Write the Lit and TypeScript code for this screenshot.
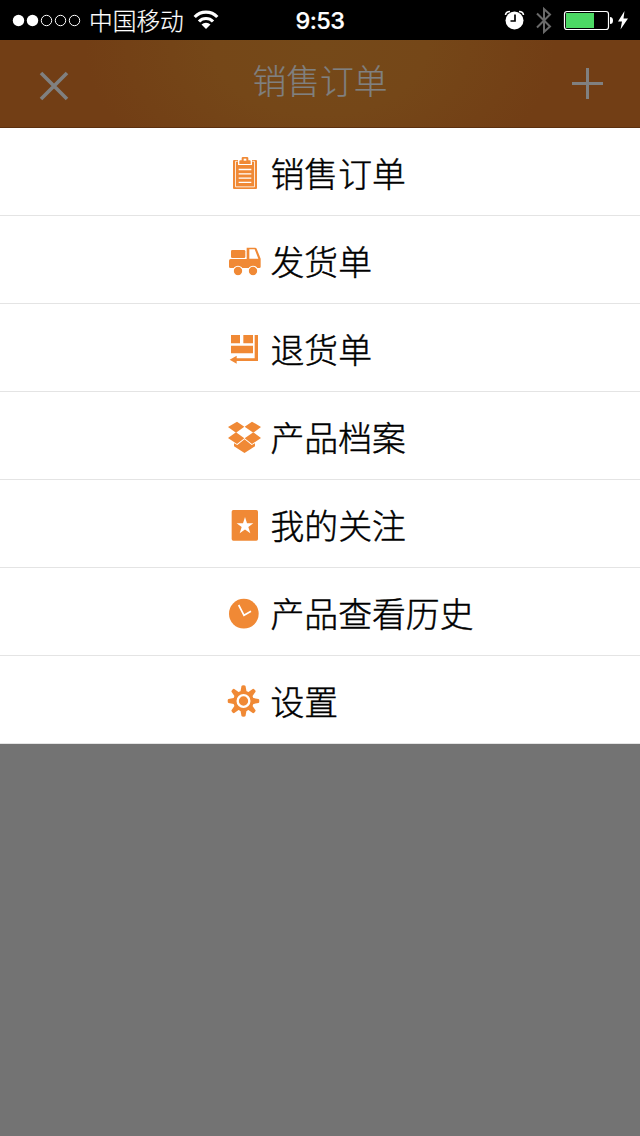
import { LitElement, html, css, svg } from "lit";
import { customElement } from "lit/decorators.js";

const clipboard = svg`
  <path d="M57 45H123Q126 45 126 48V129Q126 132 123 132H57Q54 132 54 129V48Q54 45 57 45Z"/>
  <path d="M68 49H61.500V125.500H118.500V49H112" fill="none" stroke="#fff" stroke-width="2.400"/>
  <path d="M69 43H111V60H69Z" fill="#fff"/>
  <path d="M73 57V49Q73 46 76 46H80V39Q80 36 84 36H96Q100 36 100 39V46H104Q107 46 107 49V57Z"/>
  <path d="M86 41H94V47H86Z" fill="#fff"/>
  <path d="M71 73.500H109M71 86.500H109M71 99.500H109M71 112H109" stroke="#fff" stroke-width="4"/>`;

const truck = svg`
  <rect x="48" y="51" width="43" height="24" rx="4"/>
  <path fill-rule="evenodd" d="M95 44H120Q124 44 125 47L137 77V101Q137 105 133 105H46Q42 105 42 101V83Q42 78 47 78H95ZM103 49V77H130L119 49Z"/>
  <circle cx="69" cy="114" r="14.300" stroke="#fff" stroke-width="3.400"/>
  <circle cx="114" cy="114" r="14.300" stroke="#fff" stroke-width="3.400"/>`;

const returns = svg`
  <path d="M48 42H75V67H48ZM85 42H114V67H85ZM48 74H114V97H48ZM119 42H129V120H65V128L44 116L65 104V112H119Z"/>`;

const openBox = svg`
  <path d="M66 38L88 53L63 71L39 54ZM111 38L138 54L115 71L89 53ZM39 87L63 70L88 88L66 105ZM138 87L115 70L89 88L111 105Z"/>
  <path d="M88.500 91L110 108L120 103V112L88.500 132L57 112V103L67 108Z"/>`;

const favourite = svg`
  <rect x="50" y="39" width="79" height="92" rx="5"/>
  <path fill="#fff" d="M90 60L96 79H115L100 90L106 109L90 97.500L74 109L80 90L65 79H84Z"/>`;

const clock = svg`
  <circle cx="86.500" cy="86" r="44.500"/>
  <path d="M71 60L87 91L108 79" fill="none" stroke="#fff" stroke-width="5"/>`;

const gear = svg`
  <circle cx="85.500" cy="84" r="31"/>
  ${[0, 45, 90, 135, 180, 225, 270, 315].map(
    (a) => svg`<path transform="rotate(${a} 85.500 84)" d="M76 58L79.500 39Q80 36.500 85.500 36.500T91.500 39L95 58Z"/>`
  )}
  <circle cx="85.500" cy="84" r="17.500" fill="none" stroke="#fff" stroke-width="7"/>`;

const entries = [
  { label: "销售订单", icon: clipboard },
  { label: "发货单", icon: truck },
  { label: "退货单", icon: returns },
  { label: "产品档案", icon: openBox },
  { label: "我的关注", icon: favourite },
  { label: "产品查看历史", icon: clock },
  { label: "设置", icon: gear },
];

@customElement("status-bar")
class StatusBar extends LitElement {
  static styles = css`
    :host { display: grid; grid-template-columns: 1fr auto 1fr; align-items: center; height: 40px; background: #000; color: #fff; }
    .left { display: flex; align-items: center; height: 40px; padding-left: 12px; }
    .right { display: flex; align-items: center; justify-content: flex-end; height: 40px; }
    .carrier { font: 300 23.700px/40px "Noto Sans CJK SC", sans-serif; height: 40px; margin: 0 9px 0 8px; white-space: nowrap; -webkit-text-stroke: 0.200px #fff; }
    .time { font: 500 23.500px/38px Inter, sans-serif; letter-spacing: -0.600px; padding-top: 2px; -webkit-text-stroke: 0.200px #fff; }
    svg { display: block; flex: none; }
  `;
  render() {
    return html`
      <div class="left">
        <svg width="69" height="40" viewBox="12 0 69 40" fill="#fff">
          <circle cx="18.500" cy="20.500" r="5.700"/><circle cx="32.500" cy="20.500" r="5.700"/>
          <g fill="none" stroke="#fff" stroke-width="1"><circle cx="46.500" cy="20.500" r="5.200"/><circle cx="60.500" cy="20.500" r="5.200"/><circle cx="74.500" cy="20.500" r="5.200"/></g>
        </svg>
        <span class="carrier">中国移动</span>
        <svg width="26" height="40" viewBox="193.500 0 26 40">
          <g fill="none" stroke="#fff" stroke-width="3.200"><path d="M195.200 17A15.500 15.500 0 0 1 217.800 17"/><path d="M199.500 21.500A9.700 9.700 0 0 1 213.500 21.500"/></g>
          <path fill="#fff" d="M206.500 29L202 24.600A6.400 6.400 0 0 1 211 24.600Z"/>
        </svg>
      </div>
      <span class="time">9:53</span>
      <div class="right">
        <svg width="140" height="40" viewBox="500 0 140 40">
          <circle cx="514.500" cy="20.500" r="9" fill="#fff"/>
          <path d="M505.500 15Q506 11.500 510 11.500M519 11.500Q523 11.500 523.500 15" fill="none" stroke="#fff" stroke-width="1.600"/>
          <path d="M515 14.500V21H510.500" fill="none" stroke="#000" stroke-width="1.700"/>
          <path d="M537 13.500L550 26.500L544 32V9L550 14.500L537 27.500" fill="none" stroke="#6a6a6a" stroke-width="2"/>
          <rect x="564.500" y="11.500" width="44" height="18" rx="2.500" fill="none" stroke="#fff" stroke-width="1.200"/>
          <rect x="566" y="13" width="28" height="15" fill="#4cd964"/>
          <path d="M610 17Q613 17 613 20.500T610 24Z" fill="#fff"/>
          <path d="M624.500 11L618 21.500H622L620.500 29.500L628 18.500H623.500Z" fill="#fff"/>
        </svg>
      </div>`;
  }
}

@customElement("app-root")
class AppRoot extends LitElement {
  static styles = css`
    :host { display: flex; flex-direction: column; height: 1136px; background: #737373; overflow: hidden; font-family: "Noto Sans CJK SC", sans-serif; font-weight: 300; }
    .nav { box-sizing: border-box; display: grid; grid-template-columns: 1fr auto 1fr; height: 88px; border-bottom: 1px solid #5c300f; color: #808080; background: radial-gradient(ellipse 235px 150px at 50% 8px, #754919 0%, #754718 45%, #723e15 100%); }
    .title { font-size: 33.800px; line-height: 79px; -webkit-text-stroke: 0.200px #808080; }
    .close { justify-self: start; display: block; margin: 31px 0 0 39px; }
    .add { justify-self: end; display: block; margin: 27px 36px 0 0; }
    .menu { background: #fff; }
    .row { box-sizing: border-box; display: flex; align-items: center; height: 88px; padding-left: 226px; border-bottom: 1px solid #e4e4e4; color: #000; font-size: 33.850px; line-height: 84px; white-space: nowrap; -webkit-text-stroke: 0.450px #000; }
    .icon { display: block; flex: none; width: 38px; height: 40px; margin-right: 6.500px; fill: #f08935; }
    .label { padding-top: 2px; }
  `;
  render() {
    return html`
      <status-bar></status-bar>
      <header class="nav">
        <svg class="close" width="30" height="30" viewBox="0 0 30 30"><path d="M2 2L28 28M28 2L2 28" stroke="#808080" stroke-width="3.600"/></svg>
        <span class="title">销售订单</span>
        <svg class="add" width="32" height="32" viewBox="0 0 32 32"><path d="M0 16.500H31M15.500 1V32" stroke="#808080" stroke-width="3"/></svg>
      </header>
      <nav class="menu">
        ${entries.map(
          (e) => html`<div class="row"><svg class="icon" viewBox="33 21 114 120">${e.icon}</svg><span class="label">${e.label}</span></div>`
        )}
      </nav>`;
  }
}
